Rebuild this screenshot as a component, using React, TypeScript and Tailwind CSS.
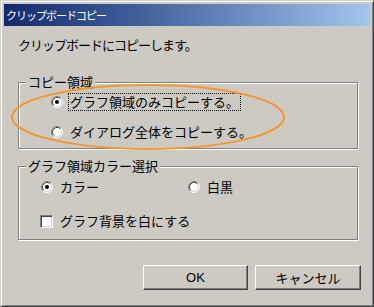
import React from "react";

function Radio({ checked }: { checked?: boolean }) {
  return (
    <svg width="12" height="12" viewBox="0 0 12 12" className="shrink-0">
      <circle cx="6" cy="6" r="5" fill="#fff" />
      <path d="M 2.11 9.89 A 5.5 5.5 0 0 1 9.89 2.11" fill="none" stroke="#808080" strokeWidth="1" />
      <path d="M 9.89 2.11 A 5.5 5.5 0 0 1 2.11 9.89" fill="none" stroke="#ffffff" strokeWidth="1" />
      <path d="M 2.82 9.18 A 4.5 4.5 0 0 1 9.18 2.82" fill="none" stroke="#404040" strokeWidth="1" />
      <path d="M 9.18 2.82 A 4.5 4.5 0 0 1 2.82 9.18" fill="none" stroke="#d4d0c8" strokeWidth="1" />
      {checked && <circle cx="6" cy="6" r="2" fill="#000" />}
    </svg>
  );
}

function GroupBox({ label, className, children }: { label: string; className?: string; children: React.ReactNode }) {
  return (
    <div
      className={
        "relative border border-[#808080] shadow-[inset_1px_1px_0_#fff,1px_1px_0_#fff] " + (className ?? "")
      }
    >
      <span className="absolute -top-[9px] left-[7px] bg-[#cdcac3] px-[2px] text-[13px] leading-[16px]">{label}</span>
      {children}
    </div>
  );
}

function Button({ children, className }: { children: React.ReactNode; className?: string }) {
  return (
    <button
      type="button"
      className={
        "flex h-[25px] items-center justify-center border border-t-white border-l-white border-r-[#404040] border-b-[#404040] bg-[#cdcac3] shadow-[inset_-1px_-1px_0_#808080] text-[13px] text-black " +
        (className ?? "")
      }
    >
      {children}
    </button>
  );
}

export default function App() {
  return (
    <div className="relative flex h-[307px] w-[374px] flex-col border border-t-[#d4d0c8] border-l-[#d4d0c8] border-r-[#404040] border-b-[#404040] bg-[#cdcac3] p-[3px] font-['Noto_Sans_CJK_JP','Liberation_Sans',sans-serif] text-black shadow-[inset_1px_1px_0_#fff,inset_-1px_-1px_0_#808080]">
      <div className="flex h-[22px] items-center bg-linear-to-r from-[#12296c] to-[#a3c6ee] pl-[2px] text-[11px] tracking-[-1px] text-white">
        クリップボードコピー
      </div>

      <div className="flex flex-1 flex-col pl-[14px] pr-[12px] pt-[11px]">
        <p className="h-[16px] text-[13px] leading-[16px] tracking-[-1px]">クリップボードにコピーします。</p>

        <GroupBox label="コピー領域" className="mt-[29px] h-[67px]">
          <div className="flex flex-col gap-[10px] pl-[32px] pt-[9px]">
            <div className="flex h-[20px] items-center gap-[5px]">
              <Radio checked />
              <span className="border border-dotted border-black px-[1px] text-[13px] leading-[16px]">
                グラフ領域のみコピーする。
              </span>
            </div>
            <div className="flex h-[20px] items-center gap-[5px]">
              <Radio />
              <span className="border border-transparent px-[1px] text-[13px] leading-[16px]">
                ダイアログ全体をコピーする。
              </span>
            </div>
          </div>
        </GroupBox>

        <GroupBox label="グラフ領域カラー選択" className="mt-[17px] h-[74px]">
          <div className="flex flex-col gap-[14px] pl-[22px] pt-[10px]">
            <div className="flex h-[20px] items-center">
              <div className="flex w-[147px] items-center gap-[7px]">
                <Radio checked />
                <span className="text-[13px] leading-[16px]">カラー</span>
              </div>
              <div className="flex items-center gap-[7px]">
                <Radio />
                <span className="text-[13px] leading-[16px]">白黒</span>
              </div>
            </div>
            <div className="-ml-[1px] flex h-[20px] items-center gap-[7px]">
              <div className="h-[13px] w-[13px] shrink-0 border border-t-[#808080] border-l-[#808080] border-r-white border-b-white bg-white shadow-[inset_1px_1px_0_#404040,inset_-1px_-1px_0_#d4d0c8]" />
              <span className="text-[13px] leading-[16px]">グラフ背景を白にする</span>
            </div>
          </div>
        </GroupBox>

        <div className="-mr-[3px] mt-[25px] flex justify-end gap-[7px]">
          <Button className="w-[105px] font-['Liberation_Sans',sans-serif] text-[12px]">OK</Button>
          <Button className="w-[106px]">キャンセル</Button>
        </div>
      </div>

      <svg className="pointer-events-none absolute left-[-1px] top-[-1px]" width="374" height="307">
        <ellipse cx="148" cy="117" rx="136" ry="32" fill="none" stroke="#f5962e" strokeWidth="2" />
      </svg>
    </div>
  );
}
